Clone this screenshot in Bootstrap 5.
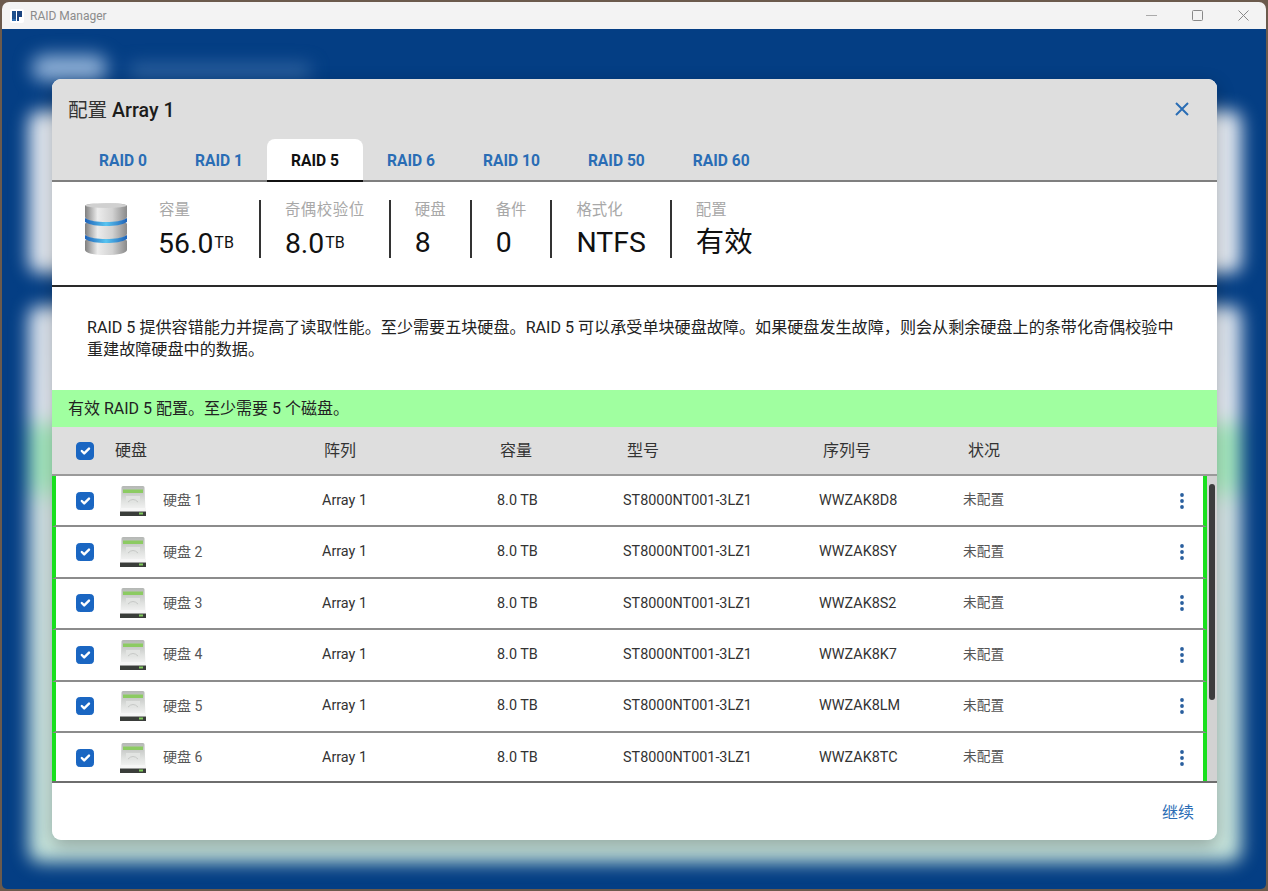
<!DOCTYPE html>
<html lang="zh">
<head>
  <meta charset="UTF-8">
  <title>RAID Manager</title>
  <link href="https://cdn.jsdelivr.net/npm/bootstrap@5.3.3/dist/css/bootstrap.min.css" rel="stylesheet">
  <style>
    html, body {
      height: 100%;
    }
    body {
      background: #6b5a4c;
      padding: 2px;
      overflow: hidden;
      font-family: Roboto, "Noto Sans CJK SC", sans-serif;
      color: #1c1c1c;
    }
    .app-window {
      height: 100%;
      border-radius: 7px 7px 5px 5px;
      overflow: hidden;
      display: flex;
      flex-direction: column;
    }
    .title-bar {
      height: 27px;
      flex: none;
      background: #f3f3f3;
      color: #8b8b8b;
      font-size: 12px;
      padding-left: 8px;
    }
    .title-logo {
      width: 14px;
      height: 14px;
      margin-right: 6px;
    }
    .win-btn {
      width: 46px;
      height: 27px;
      display: flex;
      align-items: center;
      justify-content: center;
    }
    .desktop-area {
      flex: 1;
      position: relative;
      background: #043e84;
      overflow: hidden;
      padding: 50px 49px 49px 50px;
    }
    .glow-layer {
      position: absolute;
      inset: 0;
      filter: blur(9px);
    }
    .glow-panel {
      position: absolute;
      background: #e6ecf3;
    }
    .glow-one { left: 27px; top: 82px; width: 1212px; height: 162px; border-radius: 10px; }
    .glow-two {
      left: 27px;
      top: 277px;
      width: 1212px;
      height: 556px;
      border-radius: 10px;
      background: linear-gradient(#dfe7f0 0, #e6ecf3 110px, #a9ecc0 125px, #a9ecc0 175px, #d7e6e6 200px, #c8e6dc 100%);
    }
    .glow-title { position: absolute; left: 30px; top: 26px; width: 75px; height: 26px; background: #8fb0d6; border-radius: 12px; }
    .glow-text { position: absolute; left: 128px; top: 36px; width: 180px; height: 12px; background: #3a6ca6; }
    .dialog-box {
      position: relative;
      height: 761px;
      background: #fff;
      border-radius: 9px;
      overflow: hidden;
      display: flex;
      flex-direction: column;
    }
    .dialog-shadow {
      position: absolute;
      left: 50px;
      top: 50px;
      width: 1165px;
      height: 761px;
      border-radius: 9px;
      box-shadow: 0 6px 18px rgba(0, 0, 0, .28);
    }
    .dialog-head {
      height: 103px;
      flex: none;
      background: #dedede;
      border-bottom: 2px solid #7f7f7f;
      display: flex;
      flex-direction: column;
      justify-content: space-between;
    }
    .dialog-title {
      font-size: 19.6px;
      font-weight: 500;
      padding: 20px 16px 0;
      line-height: 24px;
    }
    .dialog-title span {
      font-weight: 400;
      color: #333;
    }
    .close-x {
      position: absolute;
      right: 27px;
      top: 22px;
    }
    .raid-tabs {
      padding-left: 23px;
      border: 0;
      margin-bottom: -2px;
      flex-wrap: nowrap;
    }
    .raid-tabs .nav-link {
      font-size: 15.6px;
      font-weight: 700;
      color: #2a6db5;
      height: 43px;
      line-height: 20px;
      padding: 12px 24px 10px;
      border: 0;
      border-radius: 8px 8px 0 0;
      white-space: nowrap;
    }
    .raid-tabs .nav-link.active {
      color: #111;
      background: #fff;
      border-bottom: 2px solid #111;
    }
    .stat-strip {
      height: 105px;
      flex: none;
      padding: 18px 0 0 32px;
      border-bottom: 2px solid #2a2a2a;
    }
    .db-icon {
      width: 44px;
      height: 52px;
      margin-right: 31px;
      margin-top: 3px;
    }
    .stat-cell {
      height: 58px;
      padding-right: 24px;
      margin-right: 24px;
      border-right: 2px solid #333;
    }
    .stat-cell:last-child {
      border-right: 0;
    }
    .stat-first {
      padding-right: 25px;
    }
    .stat-label {
      font-size: 15.4px;
      line-height: 18px;
      color: #a8a8a8;
      margin: 1px 0 6px;
      white-space: nowrap;
    }
    .stat-wide .stat-label {
      letter-spacing: .6px;
    }
    .stat-value {
      font-size: 28.4px;
      line-height: 36px;
      color: #111;
      white-space: nowrap;
    }
    .stat-first .stat-value {
      margin-left: -1px;
    }
    .stat-value small {
      font-size: 16px;
      margin-left: 1px;
      vertical-align: 5px;
    }
    .raid-note {
      height: 103px;
      flex: none;
      padding: 30px 36px 0 35px;
      font-size: 16.1px;
      line-height: 22px;
      color: #222;
      margin: 0;
    }
    .ok-banner {
      height: 37px;
      flex: none;
      background: #a0ffa0;
      padding-left: 16px;
      font-size: 16px;
      line-height: 37px;
      color: #222;
    }
    .disk-grid {
      display: grid;
      grid-template-columns: 63px 209px 176px 127px 196px 145px 1fr;
      align-items: center;
    }
    .disk-head {
      height: 49px;
      flex: none;
      background: #dedede;
      font-size: 16px;
      color: #333;
      border-bottom: 2px solid #9a9a9a;
      padding-top: 1px;
    }
    .disk-head .form-check-input, .disk-row .form-check-input {
      width: 18px;
      height: 18px;
      margin: 0;
      background-color: #1a66c2;
      border-color: #1a66c2;
      float: none;
      display: block;
    }
    .disk-head .form-check-input { margin-left: 24px; }
    .disk-row .form-check-input { margin-left: 20px; }
    .disk-area {
      position: relative;
      height: 307px;
      flex: none;
      overflow: hidden;
      background: #d2d2d2;
      border-bottom: 2px solid #6e6e6e;
    }
    .disk-row {
      width: 1155px;
      height: 51.4px;
      background: #fff;
      border-left: 4px solid #19e01e;
      border-right: 4px solid #19e01e;
      border-bottom: 2px solid #8c8c8c;
      grid-template-columns: 59px 207px 175px 126px 196px 144px 1fr 42px;
      font-size: 14.4px;
      color: #333;
    }
    .disk-row:last-child {
      border-bottom: 0;
    }
    .disk-name {
      gap: 16px;
      padding-left: 4px;
      color: #555;
      font-size: 14px;
    }
    .disk-state {
      color: #555;
      font-size: 13.7px;
      padding-bottom: 2px;
    }
    .fake-thumb {
      position: absolute;
      left: 1157px;
      top: 8px;
      width: 6px;
      height: 216px;
      background: #3d3d3d;
      border-radius: 3px;
    }
    .dialog-foot {
      flex: 1;
      padding: 18px 23px 0 0;
      text-align: right;
    }
    .go-on {
      color: #2a6db5;
      font-size: 16px;
      text-decoration: none;
    }
  </style>
</head>
<body>

<div class="app-window">
  <div class="title-bar d-flex align-items-center">
    <svg class="title-logo" viewBox="0 0 14 14">
      <rect width="14" height="14" rx="2" fill="#fff"/>
      <path d="M2 2h4v8H2z" fill="#1d4f8c"/>
      <path d="M7 2h5v6H9v4H7z" fill="#1a4480"/>
      <path d="M2 10h4v2H2z" fill="#2b6cb0"/>
    </svg>
    <span>RAID Manager</span>
    <div class="ms-auto d-flex">
      <div class="win-btn">
        <svg width="11" height="11" viewBox="0 0 11 11"><path d="M0 5.5h11" stroke="#aaa"/></svg>
      </div>
      <div class="win-btn">
        <svg width="11" height="11" viewBox="0 0 11 11"><rect x=".5" y=".5" width="10" height="10" rx="1" fill="none" stroke="#888"/></svg>
      </div>
      <div class="win-btn">
        <svg width="11" height="11" viewBox="0 0 11 11"><path d="M.5.5l10 10M10.5.5l-10 10" stroke="#888"/></svg>
      </div>
    </div>
  </div>

  <div class="desktop-area">
    <div class="glow-layer">
      <div class="glow-title"></div>
      <div class="glow-text"></div>
      <div class="glow-panel glow-one"></div>
      <div class="glow-panel glow-two"></div>
    </div>
    <div class="dialog-shadow"></div>

    <div class="dialog-box">
      <div class="dialog-head">
        <div class="dialog-title"><span>配置</span> Array 1</div>
        <svg class="close-x" width="16" height="16" viewBox="0 0 16 16"><path d="M2 2l12 12M14 2L2 14" stroke="#2a6db5" stroke-width="2"/></svg>
        <ul class="nav raid-tabs">
          <li class="nav-item"><a class="nav-link" href="#">RAID 0</a></li>
          <li class="nav-item"><a class="nav-link" href="#">RAID 1</a></li>
          <li class="nav-item"><a class="nav-link active" href="#">RAID 5</a></li>
          <li class="nav-item"><a class="nav-link" href="#">RAID 6</a></li>
          <li class="nav-item"><a class="nav-link" href="#">RAID 10</a></li>
          <li class="nav-item"><a class="nav-link" href="#">RAID 50</a></li>
          <li class="nav-item"><a class="nav-link" href="#">RAID 60</a></li>
        </ul>
      </div>

      <div class="stat-strip d-flex">
        <svg class="db-icon" viewBox="0 0 44 52">
          <defs>
            <linearGradient id="metal" x1="0" x2="1" y1="0" y2="0">
              <stop offset="0" stop-color="#7f7f7f"/>
              <stop offset=".3" stop-color="#ececec"/>
              <stop offset=".65" stop-color="#d2d2d2"/>
              <stop offset="1" stop-color="#8a8a8a"/>
            </linearGradient>
            <linearGradient id="band" x1="0" x2="1" y1="0" y2="0">
              <stop offset="0" stop-color="#1f62b8"/>
              <stop offset=".5" stop-color="#58c4f0"/>
              <stop offset="1" stop-color="#1f62b8"/>
            </linearGradient>
          </defs>
          <path d="M1 3c0-2 9-3 21-3s21 1 21 3v11c0 3-9 5-21 5S1 17 1 14z" fill="url(#metal)"/>
          <path d="M1 21c0-2 9-4 21-4s21 2 21 4v10c0 3-9 5-21 5S1 34 1 31z" fill="url(#metal)"/>
          <path d="M1 38c0-2 9-4 21-4s21 2 21 4v9c0 3-9 5-21 5S1 50 1 47z" fill="url(#metal)"/>
          <path d="M1 15c5 3 12 4 21 4s16-1 21-4v4c-5 3-12 4-21 4S6 22 1 19z" fill="url(#band)"/>
          <path d="M1 32c5 3 12 4 21 4s16-1 21-4v4c-5 3-12 4-21 4S6 39 1 36z" fill="url(#band)"/>
          <ellipse cx="22" cy="2.6" rx="20.5" ry="2.4" fill="#d0d0d0"/>
        </svg>
        <div class="stat-cell stat-first"><div class="stat-label">容量</div><div class="stat-value">56.0<small>TB</small></div></div>
        <div class="stat-cell stat-wide"><div class="stat-label">奇偶校验位</div><div class="stat-value">8.0<small>TB</small></div></div>
        <div class="stat-cell"><div class="stat-label">硬盘</div><div class="stat-value">8</div></div>
        <div class="stat-cell"><div class="stat-label">备件</div><div class="stat-value">0</div></div>
        <div class="stat-cell"><div class="stat-label">格式化</div><div class="stat-value">NTFS</div></div>
        <div class="stat-cell"><div class="stat-label">配置</div><div class="stat-value">有效</div></div>
      </div>

      <p class="raid-note">RAID 5 提供容错能力并提高了读取性能。至少需要五块硬盘。RAID 5 可以承受单块硬盘故障。如果硬盘发生故障，则会从剩余硬盘上的条带化奇偶校验中重建故障硬盘中的数据。</p>

      <div class="ok-banner">有效 RAID 5 配置。至少需要 5 个磁盘。</div>

      <div class="disk-grid disk-head">
        <div><input class="form-check-input" type="checkbox" checked></div>
        <div>硬盘</div>
        <div>阵列</div>
        <div>容量</div>
        <div>型号</div>
        <div>序列号</div>
        <div>状况</div>
      </div>

      <div class="disk-area" id="diskArea">
        <div class="fake-thumb"></div>
      </div>

      <div class="dialog-foot"><a class="go-on" href="#">继续</a></div>
    </div>
  </div>
</div>

<script>
  const disks = [
    ["硬盘 1", "WWZAK8D8"],
    ["硬盘 2", "WWZAK8SY"],
    ["硬盘 3", "WWZAK8S2"],
    ["硬盘 4", "WWZAK8K7"],
    ["硬盘 5", "WWZAK8LM"],
    ["硬盘 6", "WWZAK8TC"]
  ];

  const driveIcon = `<svg width="28" height="30" viewBox="0 0 28 30">
    <defs>
      <linearGradient id="driveTop" x1="0" x2="0" y1="0" y2="1">
        <stop offset="0" stop-color="#b4b7b4"/>
        <stop offset=".6" stop-color="#dfe1df"/>
        <stop offset="1" stop-color="#f5f5f5"/>
      </linearGradient>
    </defs>
    <path d="M2.500 1.500q0-1.500 1.500-1.500h20q1.500 0 1.500 1.500l1 23H1.500z" fill="url(#driveTop)"/>
    <path d="M4 3.500h20v3.500H4z" fill="#8ccb62"/>
    <path d="M7 10h14v7H7z" fill="#e2e4e2"/>
    <path d="M9 16q5-5 10 0" fill="none" stroke="#c6c8c6"/>
    <path d="M1 22h26v3.500H1z" fill="#f6f6f6"/>
    <path d="M1 25.500h26V30H1z" fill="#3a3d3a"/>
    <path d="M20 26.500h4v2h-4z" fill="#7fc95a"/>
  </svg>`;

  const dots = `<svg width="6" height="18" viewBox="0 0 6 18"><circle cx="3" cy="3" r="1.9" fill="#2a5f9e"/><circle cx="3" cy="9" r="1.9" fill="#2a5f9e"/><circle cx="3" cy="15" r="1.9" fill="#2a5f9e"/></svg>`;

  const area = document.getElementById("diskArea");
  let html = "";
  for (const d of disks) {
    html += `<div class="disk-grid disk-row">
      <div><input class="form-check-input" type="checkbox" checked></div>
      <div class="disk-name d-flex align-items-center">${driveIcon}<span>${d[0]}</span></div>
      <div>Array 1</div>
      <div>8.0 TB</div>
      <div>ST8000NT001-3LZ1</div>
      <div>${d[1]}</div>
      <div class="disk-state">未配置</div>
      <div class="d-flex justify-content-center">${dots}</div>
    </div>`;
  }
  area.insertAdjacentHTML("afterbegin", html);
</script>
<script src="https://cdn.jsdelivr.net/npm/bootstrap@5.3.3/dist/js/bootstrap.bundle.min.js"></script>
</body>
</html>
